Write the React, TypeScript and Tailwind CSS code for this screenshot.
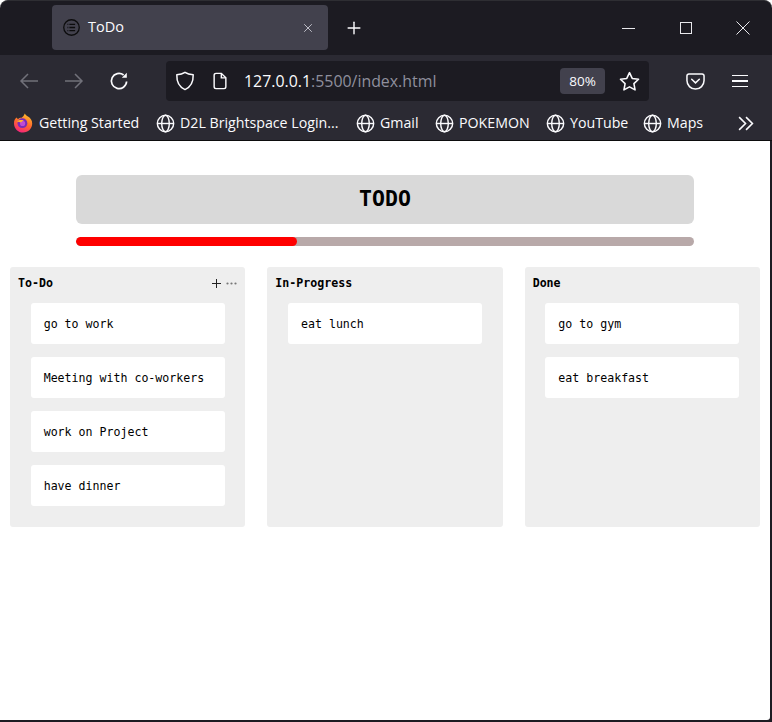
import { Plus, X } from "lucide-react";

const UI_FONT = "font-['Open_Sans','Noto_Sans',sans-serif]";
const MONO_FONT = "font-['DejaVu_Sans_Mono',monospace]";

const BOOKMARKS = [
  { label: "D2L Brightspace Login...", width: "w-[200px]" },
  { label: "Gmail", width: "w-[79px]" },
  { label: "POKEMON", width: "w-[111px]" },
  { label: "YouTube", width: "w-[97px]" },
  { label: "Maps", width: "w-[94px]" },
];

const COLUMNS = [
  {
    title: "To-Do",
    actions: true,
    items: ["go to work", "Meeting with co-workers", "work on Project", "have dinner"],
  },
  { title: "In-Progress", actions: false, items: ["eat lunch"] },
  { title: "Done", actions: false, items: ["go to gym", "eat breakfast"] },
];

function Globe() {
  return (
    <svg viewBox="0 0 20 20" className="w-[19px] h-[19px] shrink-0" fill="none" stroke="#fbfbfe" strokeWidth="1.5">
      <circle cx="10" cy="10" r="8.6" />
      <ellipse cx="10" cy="10" rx="4" ry="8.6" />
      <path d="M1.4 10h17.2" />
    </svg>
  );
}

function FirefoxLogo() {
  return (
    <svg viewBox="0 0 20 20" className="w-[20px] h-[20px] shrink-0 -mt-[2px] -ml-[1px] mr-[1px]">
      <defs>
        <linearGradient id="fx" x1="0.7" y1="0" x2="0.3" y2="1">
          <stop offset="0" stopColor="#ffbd2e" />
          <stop offset="0.5" stopColor="#ff6a2b" />
          <stop offset="1" stopColor="#f5207f" />
        </linearGradient>
      </defs>
      <path d="M1 10.5C1 7.5 2 5.5 3.6 4.6L5 6.2C6 5 7.3 4.6 8.6 4.7C9.8 4 10.8 3 11.8 0.6C12.6 2 13.6 2.8 15 3.6C17.6 5.2 19.2 7.6 19.2 10.6C19.2 15.7 15.2 19.6 10.1 19.6C5 19.6 1 15.6 1 10.5Z" fill="url(#fx)" />
      <circle cx="9.4" cy="10.2" r="4.9" fill="#7a2bb8" />
      <circle cx="9.6" cy="10.4" r="2.6" fill="#c04bd6" />
      <path d="M4 8.2C6 6.6 9 6.8 11 7.4C9.6 7.8 8.8 8.4 8.4 9.2C6.8 9.2 5.2 9 4 8.2Z" fill="#ffb02e" />
    </svg>
  );
}

function BrowserChrome() {
  return (
    <div className={`${UI_FONT} text-[#fbfbfe]`}>
      {/* Tab strip */}
      <div className="h-[55px] bg-[#1c1b22] flex items-center rounded-t-lg border-t border-[#2e2e33] pl-[52px]">
        <div className="w-[276px] h-[45px] -mt-[1px] rounded bg-[#42414d] flex items-center pl-[11px] pr-[13px]">
          <svg viewBox="0 0 16 16" className="w-[17px] h-[17px] shrink-0" fill="none" stroke="#0c0c0d" strokeWidth="1.2">
            <circle cx="8" cy="8" r="7.3" />
            <path d="M6 5h5.4M6 8h5.4M6 11h5.4M4.2 5h.8M4.2 8h.8M4.2 11h.8" />
          </svg>
          <span className="ml-[8px] text-[14.5px] leading-none flex-1">ToDo</span>
          <X className="w-[14px] h-[14px] text-[#cfcfd8]" strokeWidth={1.5} />
        </div>
        <Plus className="ml-[16px] w-[20px] h-[20px]" strokeWidth={1.7} />
        <div className="ml-auto flex items-center">
          <div className="w-[13px] h-[1px] bg-[#e8e8ec] mr-[45px]" />
          <div className="w-[12px] h-[12px] border border-[#e8e8ec] mr-[44px]" />
          <svg viewBox="0 0 14 14" className="w-[14px] h-[14px] mr-[22px]" fill="none" stroke="#e8e8ec" strokeWidth="1">
            <path d="M0.5 0.5l13 13M13.5 0.5l-13 13" />
          </svg>
        </div>
      </div>

      {/* Nav bar */}
      <div className="h-[52px] bg-[#2b2a33] flex items-center">
        <svg viewBox="0 0 20 20" className="ml-[19px] w-[20px] h-[20px]" fill="none" stroke="#71717a" strokeWidth="1.5">
          <path d="M19 10H2M9 3l-7 7 7 7" />
        </svg>
        <svg viewBox="0 0 20 20" className="ml-[25px] w-[20px] h-[20px]" fill="none" stroke="#71717a" strokeWidth="1.5">
          <path d="M1 10h17M11 3l7 7-7 7" />
        </svg>
        <svg viewBox="0 0 20 20" className="ml-[25px] w-[20px] h-[20px]" fill="none" stroke="#fbfbfe" strokeWidth="1.7">
          <path d="M17.6 10.5A7.6 7.6 0 1 1 14.6 4" />
          <path d="M17.8 1.8v5h-5z" fill="#fbfbfe" stroke="none" />
        </svg>
        <div className="ml-[37px] w-[483px] h-[40px] rounded bg-[#1c1b22] flex items-center">
          <svg viewBox="0 0 20 20" className="ml-[9px] w-[20px] h-[20px] shrink-0" fill="none" stroke="#fbfbfe" strokeWidth="1.5">
            <path d="M10 1.3C7.6 3 5 3.6 1.8 3.8C1.6 11 4 16 10 18.6C16 16 18.4 11 18.2 3.8C15 3.6 12.4 3 10 1.3Z" strokeLinejoin="round" />
          </svg>
          <svg viewBox="0 0 16 20" className="ml-[17px] w-[16px] h-[18px] shrink-0" fill="none" stroke="#fbfbfe" strokeWidth="1.6">
            <path d="M3.5 1.5h6L14.5 6.5v10a2 2 0 0 1-2 2h-9a2 2 0 0 1-2-2v-13a2 2 0 0 1 2-2Z" />
            <path d="M9.5 1.5v5h5" />
          </svg>
          <span className="ml-[16px] text-[15.9px] leading-none whitespace-nowrap mt-[2px]">
            127.0.0.1<span className="text-[#8f8f9d]">:5500/index.html</span>
          </span>
          <div className="ml-auto w-[45px] h-[26px] rounded bg-[#42414d] flex items-center justify-center text-[13.5px]">80%</div>
          <svg viewBox="0 0 20 20" className="ml-[14px] mr-[9px] w-[21px] h-[21px] shrink-0" fill="none" stroke="#fbfbfe" strokeWidth="1.5">
            <path d="M10 1.6l2.6 5.5 6 .8-4.4 4.1 1.1 6L10 15.1 4.7 18l1.1-6L1.4 7.9l6-.8Z" strokeLinejoin="round" />
          </svg>
        </div>
        <svg viewBox="0 0 20 20" className="ml-[37px] w-[19px] h-[19px]" fill="none" stroke="#fbfbfe" strokeWidth="1.6">
          <path d="M3 2.2h14a2 2 0 0 1 2 2V9a9 9 0 0 1-18 0V4.2a2 2 0 0 1 2-2Z" />
          <path d="M6 7.6l4 3.8 4-3.8" strokeLinecap="round" />
        </svg>
        <div className="ml-[27px] w-[16px] flex flex-col gap-[4px]">
          <div className="h-[1.5px] bg-[#fbfbfe]" />
          <div className="h-[1.5px] bg-[#fbfbfe]" />
          <div className="h-[1.5px] bg-[#fbfbfe]" />
        </div>
      </div>

      {/* Bookmarks bar */}
      <div className="h-[34px] bg-[#2b2a33] border-b border-[#0c0c0d] flex items-center text-[14.2px] leading-none whitespace-nowrap pl-[14px]">
        <div className="w-[142px] shrink-0 flex items-center gap-[5px]">
          <FirefoxLogo />
          <span>Getting Started</span>
        </div>
        {BOOKMARKS.map((b) => (
          <div key={b.label} className={`${b.width} shrink-0 flex items-center gap-[5px]`}>
            <Globe />
            <span>{b.label}</span>
          </div>
        ))}
        <svg viewBox="0 0 16 16" className="w-[17px] h-[17px] shrink-0" fill="none" stroke="#fbfbfe" strokeWidth="1.5">
          <path d="M2 2l6 6-6 6M8.5 2l6 6-6 6" />
        </svg>
      </div>
    </div>
  );
}

function Column({ title, actions, items }: { title: string; actions: boolean; items: string[] }) {
  return (
    <div className="h-[260px] bg-[#eeeeee] rounded-[3px]">
      <div className="h-[36px] pl-[8px] pr-[8px] pb-[2px] flex items-center justify-between">
        <span className="text-[11.6px] font-bold text-black">{title}</span>
        {actions && (
          <div className="flex items-center gap-[3px] -mt-[2px]">
            <svg viewBox="0 0 9 9" className="w-[9px] h-[9px]" fill="none" stroke="#222" strokeWidth="1">
              <path d="M0 4.5h9M4.5 0v9" />
            </svg>
            <svg viewBox="0 0 11 3" className="ml-[2px] w-[11px] h-[3px]" fill="#777">
              <circle cx="1.5" cy="1.5" r="1.1" />
              <circle cx="5.5" cy="1.5" r="1.1" />
              <circle cx="9.5" cy="1.5" r="1.1" />
            </svg>
          </div>
        )}
      </div>
      <div className="flex flex-col gap-[13px] px-[20.67px]">
        {items.map((item) => (
          <div key={item} className="h-[41px] bg-white rounded-[3px] pl-[13px] pt-[2px] flex items-center text-[11.6px] text-black">
            {item}
          </div>
        ))}
      </div>
    </div>
  );
}

export default function App() {
  return (
    <div className="w-[772px] h-[722px] overflow-hidden">
      <BrowserChrome />
      <div className="h-[581px] bg-[#1c1b22]">
        <div className={`${MONO_FONT} w-[770px] h-[579px] bg-white rounded-br-[3px]`}>
          <div className="px-[76px] pt-[34px]">
            <div className="h-[49px] bg-[#d9d9d9] rounded-md flex items-center justify-center text-[21.5px] font-bold text-black">
              TODO
            </div>
            <div className="mt-[13px] h-[9px] rounded-full bg-[#b8a9a9] overflow-hidden">
              <div className="h-full w-[221px] bg-[#ff0000] rounded-full" />
            </div>
          </div>
          <div className="mt-[21px] px-[10px] grid grid-cols-3 gap-[22px]">
            {COLUMNS.map((col) => (
              <Column key={col.title} {...col} />
            ))}
          </div>
        </div>
      </div>
    </div>
  );
}
